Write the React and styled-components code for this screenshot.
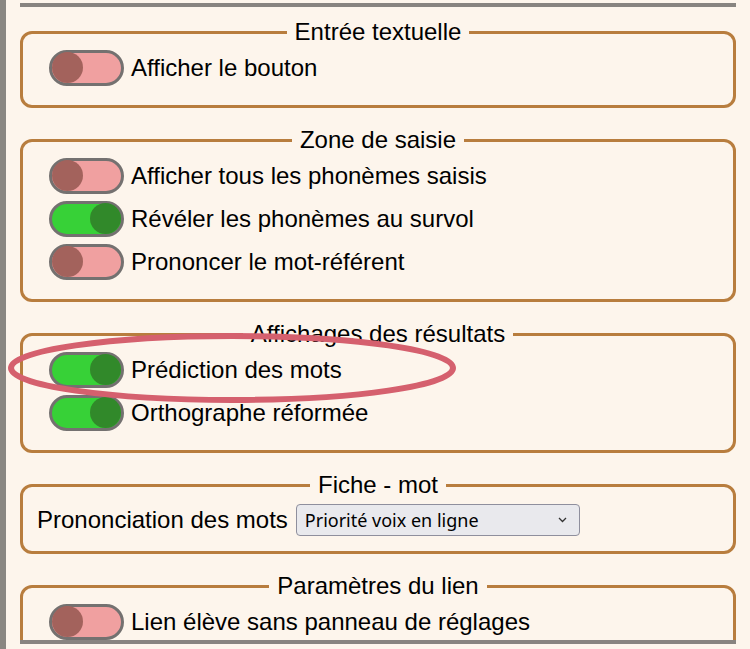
import React, { useState } from 'react';
import styled, { createGlobalStyle } from 'styled-components';

const GlobalStyle = createGlobalStyle`
  html, body {
    margin: 0;
    padding: 0;
    background: #fdf5ec;
  }
  body {
    font-family: "Liberation Sans", Arial, sans-serif;
    color: #000;
  }
`;

const Page = styled.div`
  position: relative;
  display: flex;
  height: 649px;
  overflow: hidden;
  background: #fdf5ec;
`;

const EdgeStrip = styled.div`
  width: 6px;
  flex-shrink: 0;
  background: #8a8782;
`;

const Main = styled.div`
  flex: 1;
  padding: 3px 14px 0 14px;
`;

const Panel = styled.div`
  box-sizing: border-box;
  height: 641px;
  border-top: 4px solid #888480;
  border-bottom: 4px solid #888480;
  overflow: hidden;
  padding-top: 11px;
  display: flex;
  flex-direction: column;
  gap: 18px;
`;

const Group = styled.fieldset`
  margin: 0;
  padding: 0 26px 16px 26px;
  border: 3px solid #b87d3e;
  border-radius: 12px;
  min-width: 0;
  flex-shrink: 0;
`;

const Legend = styled.legend`
  margin: 0 auto;
  padding: 0 8px;
  font-size: 24px;
`;

const Row = styled.label`
  display: flex;
  align-items: center;
  gap: 7px;
  height: ${(props) => (props.$compact ? 'auto' : '43px')};
  padding-top: ${(props) => (props.$compact ? '5px' : '0')};
  margin: ${(props) => (props.$compact ? '0 0 -1px -12px' : '0')};
  font-size: 24px;
  cursor: pointer;
  white-space: nowrap;
`;

const Track = styled.span`
  box-sizing: border-box;
  display: flex;
  justify-content: ${(props) => (props.$on ? 'flex-end' : 'flex-start')};
  align-items: center;
  width: 75px;
  height: 36px;
  flex-shrink: 0;
  border: 3px solid #747170;
  border-radius: 18px;
  background: ${(props) => (props.$on ? '#37d137' : '#f0a0a0')};
`;

const Knob = styled.span`
  width: 31px;
  height: 31px;
  border-radius: 50%;
  background: ${(props) => (props.$on ? '#31892a' : '#a3625c')};
`;

const SelectWrap = styled.span`
  position: relative;
  display: inline-flex;
  margin-left: 1px;
`;

const Select = styled.select`
  appearance: none;
  box-sizing: border-box;
  width: 284px;
  height: 32px;
  padding: 0 30px 0 8px;
  border: 1px solid #8f8f9d;
  border-radius: 4px;
  background: #e9e9ed;
  font-family: "Noto Sans", "Open Sans", sans-serif;
  font-size: 18px;
  color: #000;
`;

const Chevron = styled.svg`
  position: absolute;
  right: 13px;
  top: 13px;
  pointer-events: none;
`;

const Annotation = styled.svg`
  position: absolute;
  left: 4px;
  top: 330px;
  pointer-events: none;
`;

const Switch = ({ label, initial }) => {
  const [on, setOn] = useState(initial);

  return (
    <Row onClick={() => setOn(!on)}>
      <Track $on={on}>
        <Knob $on={on} />
      </Track>
      {label}
    </Row>
  );
};

const groups = [
  {
    title: 'Entrée textuelle',
    items: [{ label: 'Afficher le bouton', on: false }],
  },
  {
    title: 'Zone de saisie',
    items: [
      { label: 'Afficher tous les phonèmes saisis', on: false },
      { label: 'Révéler les phonèmes au survol', on: true },
      { label: 'Prononcer le mot-référent', on: false },
    ],
  },
  {
    title: 'Affichages des résultats',
    items: [
      { label: 'Prédiction des mots', on: true },
      { label: 'Orthographe réformée', on: true },
    ],
  },
];

const App = () => {
  const [voice, setVoice] = useState('online');

  return (
    <>
      <GlobalStyle />
      <Page>
        <EdgeStrip />
        <Main>
          <Panel>
            {groups.map((group) => (
              <Group key={group.title}>
                <Legend>{group.title}</Legend>
                {group.items.map((item) => (
                  <Switch key={item.label} label={item.label} initial={item.on} />
                ))}
              </Group>
            ))}
            <Group>
              <Legend>Fiche - mot</Legend>
              <Row $compact as="div">
                Prononciation des mots
                <SelectWrap>
                  <Select value={voice} onChange={(e) => setVoice(e.target.value)}>
                    <option value="online">Priorité voix en ligne</option>
                    <option value="local">Priorité voix locale</option>
                  </Select>
                  <Chevron width="9" height="6" viewBox="0 0 9 6">
                    <path d="M1 1 L4.5 4.5 L8 1" fill="none" stroke="#333" strokeWidth="1.3" />
                  </Chevron>
                </SelectWrap>
              </Row>
            </Group>
            <Group>
              <Legend>Paramètres du lien</Legend>
              <Switch label="Lien élève sans panneau de réglages" initial={false} />
            </Group>
          </Panel>
        </Main>
        <Annotation width="460" height="80" viewBox="0 0 460 80">
          <ellipse cx="228" cy="38" rx="221" ry="32" fill="none" stroke="#d5606e" strokeWidth="6" />
        </Annotation>
      </Page>
    </>
  );
};

export default App;
